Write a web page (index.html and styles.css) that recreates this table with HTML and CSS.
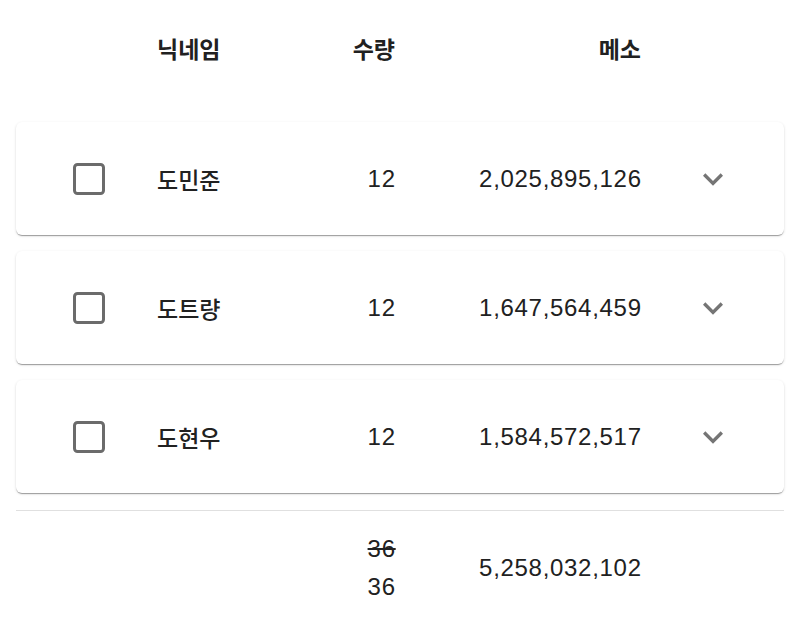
FILE: index.html
```html
<!DOCTYPE html>
<html lang="ko">
<head>
<meta charset="utf-8">
<link rel="stylesheet" href="styles.css">
</head>
<body>
<div class="page">
  <div class="grid head">
    <div></div>
    <div class="name">닉네임</div>
    <div class="num">수량</div>
    <div class="num">메소</div>
    <div></div>
  </div>
  <div class="list">
    <div class="card grid">
      <div class="cb"><svg width="32" height="32" viewBox="0 0 32 32"><rect x="1.5" y="1.5" width="29" height="29" rx="3" fill="none" stroke="#6b6b6b" stroke-width="3"/></svg></div>
      <div class="name">도민준</div>
      <div class="num val">12</div>
      <div class="num val">2,025,895,126</div>
      <div class="chev"><svg width="40" height="40" viewBox="0 0 24 24"><path d="M16.59 8.59 12 13.17 7.41 8.59 6 10l6 6 6-6z" fill="#757575"/></svg></div>
    </div>
    <div class="card grid">
      <div class="cb"><svg width="32" height="32" viewBox="0 0 32 32"><rect x="1.5" y="1.5" width="29" height="29" rx="3" fill="none" stroke="#6b6b6b" stroke-width="3"/></svg></div>
      <div class="name">도트량</div>
      <div class="num val">12</div>
      <div class="num val">1,647,564,459</div>
      <div class="chev"><svg width="40" height="40" viewBox="0 0 24 24"><path d="M16.59 8.59 12 13.17 7.41 8.59 6 10l6 6 6-6z" fill="#757575"/></svg></div>
    </div>
    <div class="card grid">
      <div class="cb"><svg width="32" height="32" viewBox="0 0 32 32"><rect x="1.5" y="1.5" width="29" height="29" rx="3" fill="none" stroke="#6b6b6b" stroke-width="3"/></svg></div>
      <div class="name">도현우</div>
      <div class="num val">12</div>
      <div class="num val">1,584,572,517</div>
      <div class="chev"><svg width="40" height="40" viewBox="0 0 24 24"><path d="M16.59 8.59 12 13.17 7.41 8.59 6 10l6 6 6-6z" fill="#757575"/></svg></div>
    </div>
  </div>
  <div class="divider"></div>
  <div class="grid foot">
    <div></div>
    <div></div>
    <div class="num val stack"><span class="strike">36</span><span>36</span></div>
    <div class="num val">5,258,032,102</div>
    <div></div>
  </div>
</div>
</body>
</html>
```

FILE: styles.css
```css
html, body {
  margin: 0;
  padding: 0;
  background: #ffffff;
}
body {
  font-family: "Liberation Sans", "Noto Sans CJK KR", sans-serif;
  color: #212121;
}
.page {
  padding: 0 16px;
}
.grid {
  display: grid;
  grid-template-columns: 141px 140px 98px 246px 143px;
  align-items: center;
}
.head {
  height: 96px;
}
.head .num {
  font-family: "Noto Sans CJK KR", sans-serif;
  font-weight: 700;
  font-size: 23px;
  text-align: right;
}
.list {
  margin-top: 26px;
  display: flex;
  flex-direction: column;
  gap: 16px;
}
.card {
  height: 113px;
  background: #ffffff;
  border-radius: 6px;
  box-shadow: 0 2px 1px -1px rgba(0,0,0,0.22), 0 1px 1px 0 rgba(0,0,0,0.14), 0 1px 3px 0 rgba(0,0,0,0.12);
}
.cb {
  display: flex;
  padding-left: 57px;
  height: 32px;
}
.name {
  font-family: "Noto Sans CJK KR", sans-serif;
  font-weight: 700;
  font-size: 23px;
}
.card .name {
  font-weight: 500;
}
.num {
  text-align: right;
}
.val {
  font-size: 24px;
  letter-spacing: 0.7px;
  margin-right: -0.7px;
}
.chev {
  display: flex;
  justify-content: center;
  height: 40px;
}
.divider {
  margin-top: 17px;
  height: 1px;
  background: #e0e0e0;
}
.foot {
  padding-top: 19px;
}
.stack {
  display: flex;
  flex-direction: column;
  align-items: flex-end;
  line-height: 38px;
}
.strike {
  text-decoration: line-through;
}
```
